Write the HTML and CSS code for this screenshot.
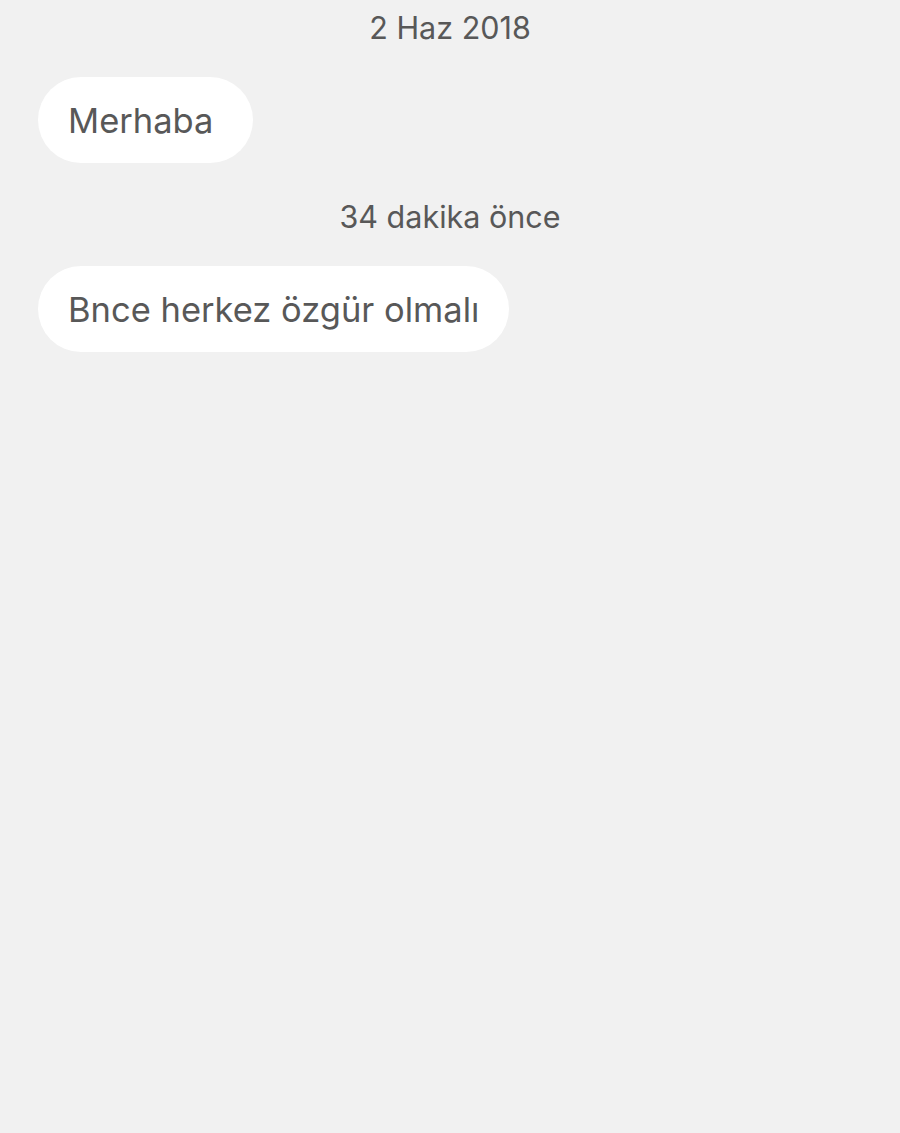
FILE: index.html
```html
<!DOCTYPE html>
<html lang="tr">
<head>
  <meta charset="UTF-8">
  <meta name="viewport" content="width=device-width, initial-scale=1.0">
  <title>Mesajlar</title>
  <link rel="stylesheet" href="styles.css">
</head>
<body>

  <div class="thread">
    <div class="stamp">2 Haz 2018</div>
    <div class="bubble">Merhaba&nbsp;</div>

    <div class="stamp">34 dakika önce</div>
    <div class="bubble">Bnce herkez özgür olmalı</div>
  </div>

</body>
</html>
```

FILE: styles.css
```css
html, body {
  margin: 0;
  height: 100%;
}
body {
  font-family: Inter, "Noto Sans", sans-serif;
  background-color: #f1f1f1;
  color: #585858;
}
.thread {
  display: flex;
  flex-direction: column;
  align-items: flex-start;
  padding: 0 38px;
}
.stamp {
  align-self: center;
  font-size: 30.5px;
  line-height: 40px;
  margin-top: 8px;
  margin-bottom: 29px;
}
.stamp + .bubble {
  margin-bottom: 26px;
}
.bubble {
  background: white;
  border-radius: 43px;
  height: 86px;
  padding: 0 30px;
  box-sizing: border-box;
  display: flex;
  align-items: center;
  font-size: 34.5px;
}
```
